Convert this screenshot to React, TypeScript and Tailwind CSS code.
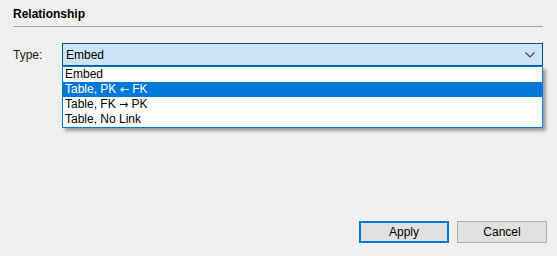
import React from "react";

const Arrow = ({ c }: { c: string }) => (
  <span className="text-[11px]" style={{ fontFamily: '"DejaVu Sans", sans-serif' }}>
    {c}
  </span>
);

export default function App() {
  const items: React.ReactNode[] = [
    "Embed",
    <>Table, PK <Arrow c="←" /> FK</>,
    <>Table, FK <Arrow c="→" /> PK</>,
    "Table, No Link",
  ];
  return (
    <div
      className="w-[557px] h-[256px] bg-[#f0f0f0] flex flex-col text-[12px] text-black overflow-hidden"
      style={{ fontFamily: '"Liberation Sans", Arial, sans-serif' }}
    >
      <div className="pl-[13px] pr-[14px] pt-[6px]">
        <div className="font-bold leading-[16px]">Relationship</div>
        <div className="mt-[4px] h-px bg-[#a0a0a0]" />
        <div className="mt-[16px] flex items-center">
          <div className="w-[49px] leading-[15px] text-[#202020] pt-[1px]">Type:</div>
          <div className="relative flex-1">
            <div className="h-[23px] border border-[#005499] bg-[#cce4f7] flex items-center pl-[3px] pr-[6px]">
              <span className="flex-1 leading-[15px] pt-[1px]">Embed</span>
              <svg width="10" height="6" viewBox="0 0 10 6" className="mr-[1px]">
                <polyline points="0.5,0.5 5,5 9.5,0.5" fill="none" stroke="#404040" strokeWidth="1.1" />
              </svg>
            </div>
            <div className="absolute left-0 right-0 top-[23px] border border-[#0078d7] bg-white shadow-[3px_3px_3px_rgba(0,0,0,0.35)]">
              {items.map((t, i) => (
                <div
                  key={i}
                  className={
                    "h-[15px] leading-[15px] pl-[2px] whitespace-nowrap " +
                    (i === 1 ? "bg-[#0078d7] text-white" : "text-black")
                  }
                >
                  {t}
                </div>
              ))}
            </div>
          </div>
        </div>
      </div>
      <div className="mt-auto flex justify-end gap-[8px] pr-[10px] pb-[13px]">
        <button className="w-[90px] h-[22px] border-2 border-[#0078d7] bg-[#e1e1e1] leading-[15px]">Apply</button>
        <button className="w-[90px] h-[22px] border border-[#adadad] bg-[#e1e1e1] leading-[15px]">Cancel</button>
      </div>
    </div>
  );
}
